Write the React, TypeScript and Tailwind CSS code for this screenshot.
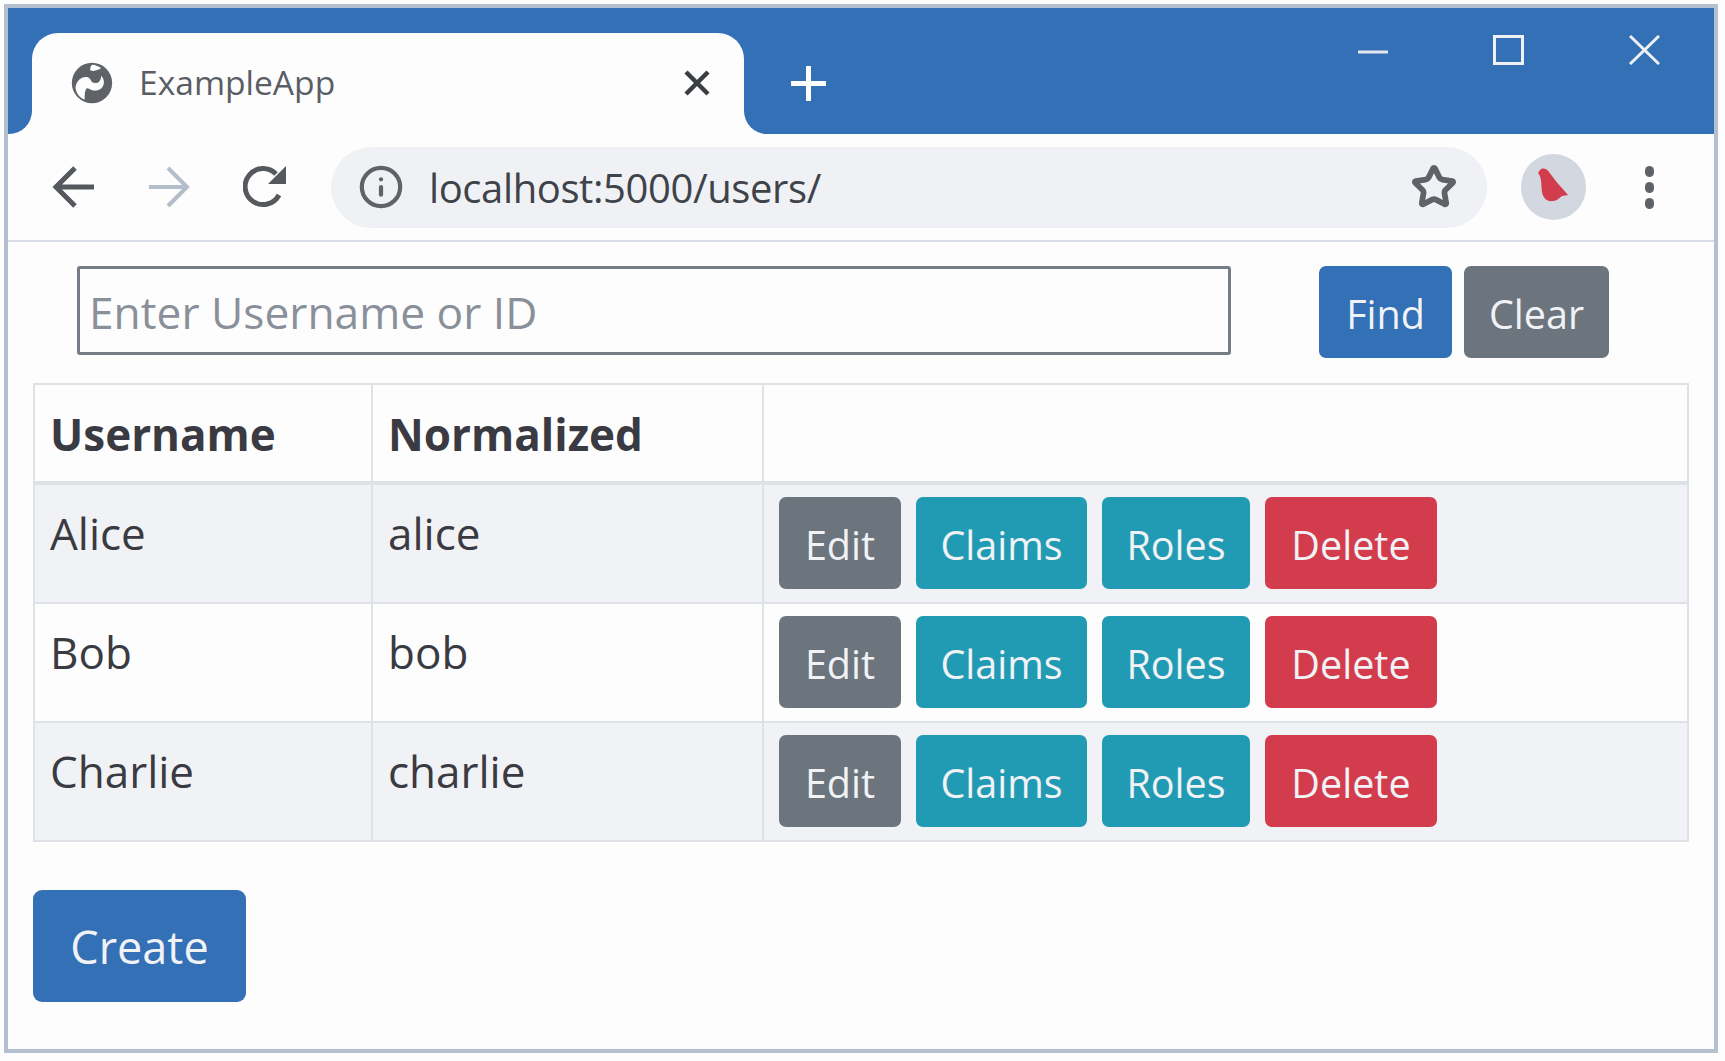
import React from 'react';
import { Info, Star } from 'lucide-react';

interface User {
    name: string;
    normalized: string;
}

const users: User[] = [
    { name: 'Alice', normalized: 'alice' },
    { name: 'Bob', normalized: 'bob' },
    { name: 'Charlie', normalized: 'charlie' },
];

const rowHeights = ['h-[120px]', 'h-[119px]', 'h-[119px]'];
const btn = 'h-[92px] pt-[5px] rounded-[7px] text-[#f1f2f5] text-[39.5px] leading-none';

function Globe() {
    return (
        <svg width="44" height="44" viewBox="0 0 24 24">
            <circle cx="12" cy="12" r="11" fill="#5f6368" />
            <path d="M3 14c1-4 4-6 7-5 2 1 1 3 4 3 2 0 3-2 3-4 2 2 2 5 0 7-3 2-5 1-7 0-2-1-2 4-2 6-3-1-5-4-5-7z" fill="#fdfdfe" />
            <path d="M12 2c2 0 4 1 5 2-2 1-4 2-6 1 0-1 0-2 1-3z" fill="#fdfdfe" />
        </svg>
    );
}

function Bird() {
    return (
        <svg width="36" height="40" viewBox="0 0 36 40">
            <path d="M4 3c3-3 7-1 9 2 4 5 8 11 12 15l7 8-6 1c-3 2-5 5-9 5-6 1-10-3-11-9C5 18 6 10 2 6z" fill="#d33c4c" />
        </svg>
    );
}

function TabStrip() {
    return (
        <div className="h-[126px] bg-[#3370b5] flex items-end pl-[24px] shrink-0">
            <div className="relative w-[712px] h-[101px] bg-[#fdfdfe] rounded-t-[26px] flex items-center pl-[38px] pb-[2px]">
                <div className="absolute left-[-23px] bottom-0 w-[23px] h-[23px] bg-[#fdfdfe]">
                    <div className="w-full h-full bg-[#3370b5] rounded-br-[23px]" />
                </div>
                <div className="absolute right-[-23px] bottom-0 w-[23px] h-[23px] bg-[#fdfdfe]">
                    <div className="w-full h-full bg-[#3370b5] rounded-bl-[23px]" />
                </div>
                <Globe />
                <span className="ml-[25px] text-[33.6px] text-[#5a5e64]">ExampleApp</span>
                <svg className="ml-auto mr-[34px]" width="26" height="26" viewBox="0 0 26 26">
                    <path d="M2 2l22 22M24 2L2 24" stroke="#3a3d42" strokeWidth="4.5" />
                </svg>
            </div>
            <svg className="ml-[47px] mb-[33px]" width="35" height="35" viewBox="0 0 35 35">
                <path d="M17.5 0v35M0 17.5h35" stroke="#fdfdfe" strokeWidth="5" />
            </svg>
            <div className="ml-auto self-start flex items-center pt-[27px] pr-[54px]">
                <svg width="30" height="30" viewBox="0 0 30 30">
                    <path d="M0 17h30" stroke="#e4e7ee" strokeWidth="3" />
                </svg>
                <svg className="ml-[105px]" width="31" height="30" viewBox="0 0 31 30">
                    <rect x="1.5" y="1.5" width="28" height="27" fill="none" stroke="#eef0f4" strokeWidth="3" />
                </svg>
                <svg className="ml-[105px]" width="31" height="30" viewBox="0 0 31 30">
                    <path d="M1 1l29 28M30 1L1 29" stroke="#eef0f4" strokeWidth="3" />
                </svg>
            </div>
        </div>
    );
}

function Toolbar() {
    return (
        <div className="h-[108px] shrink-0 bg-[#fdfdfe] border-b-2 border-[#d8dce6] flex items-center pl-[43px]">
            <svg width="44" height="44" viewBox="0 0 44 44" fill="none" stroke="#55585d" strokeWidth="5">
                <path d="M43 22H5M24 3L5 22l19 19" />
            </svg>
            <svg className="ml-[53px]" width="44" height="44" viewBox="0 0 44 44" fill="none" stroke="#b4bdca" strokeWidth="4">
                <path d="M1 22h38M20 3l19 19-19 19" />
            </svg>
            <svg className="ml-[51px]" width="44" height="44" viewBox="0 0 44 44" fill="none">
                <path d="M36 30A18 18 0 1 1 33 9" stroke="#55585d" strokeWidth="5" />
                <path d="M43 1v18H25z" fill="#55585d" />
            </svg>
            <div className="ml-[44px] w-[1156px] h-[81px] rounded-full bg-[#f0f1f5] flex items-center pl-[27px] pr-[30px]">
                <Info size={46} strokeWidth={2.2} color="#5f6368" />
                <span className="ml-[25px] pt-[1px] text-[40px] text-[#3f4349] tracking-[-0.4px]">localhost:5000/users/</span>
                <Star size={46} strokeWidth={3} color="#5f6368" className="ml-auto" />
            </div>
            <div className="ml-[34px] w-[65px] h-[66px] rounded-full bg-[#d3d7e0] flex items-center justify-center">
                <Bird />
            </div>
            <div className="ml-[59px] flex flex-col gap-[5px]">
                <div className="w-[9px] h-[11px] rounded-full bg-[#5f6368]" />
                <div className="w-[9px] h-[11px] rounded-full bg-[#5f6368]" />
                <div className="w-[9px] h-[11px] rounded-full bg-[#5f6368]" />
            </div>
        </div>
    );
}

export default function App() {
    return (
        <div className="w-[1725px] h-[1061px] bg-[#fdfdfe] pt-[4px] pl-[4px] font-['Open_Sans',sans-serif] overflow-hidden">
            <div className="w-[1714px] h-[1049px] border-[4px] border-[#b4bfd0] flex flex-col">
                <TabStrip />
                <Toolbar />
                <div className="flex-1 bg-[#fdfdfe] pl-[25px]">
                    <div className="flex items-start pt-[24px] pl-[44px]">
                        <div className="w-[1154px] h-[89px] border-[3px] border-[#767c85] rounded-[3px] flex items-center pl-[9px] pt-[3px] text-[44.3px] text-[#8a9099]">
                            Enter Username or ID
                        </div>
                        <button className={`${btn} ml-[88px] w-[133px] bg-[#3370b5]`}>Find</button>
                        <button className={`${btn} ml-[12px] w-[145px] bg-[#6c757d]`}>Clear</button>
                    </div>
                    <table className="mt-[25px] w-[1654px] table-fixed border-collapse text-[#3a3a42] text-[44px]">
                        <colgroup>
                            <col className="w-[338px]" />
                            <col className="w-[391px]" />
                            <col className="w-[925px]" />
                        </colgroup>
                        <thead>
                            <tr className="h-[99px]">
                                <th className="border-2 border-b-4 border-[#dee2e6] text-left pl-[15px] pt-[2px] font-bold">Username</th>
                                <th className="border-2 border-b-4 border-[#dee2e6] text-left pl-[15px] pt-[2px] font-bold">Normalized</th>
                                <th className="border-2 border-b-4 border-[#dee2e6]" />
                            </tr>
                        </thead>
                        <tbody>
                            {users.map((user, i) => (
                                <tr key={user.name} className={`${rowHeights[i]} ${i % 2 === 0 ? 'bg-[#f1f2f5]' : ''}`}>
                                    <td className="border-2 border-[#dee2e6] align-top pl-[15px] pt-[15px]">{user.name}</td>
                                    <td className="border-2 border-[#dee2e6] align-top pl-[15px] pt-[15px]">{user.normalized}</td>
                                    <td className="border-2 border-[#dee2e6] align-top pl-[15px] pt-[12px]">
                                        <div className="flex gap-[15px]">
                                            <button className={`${btn} w-[122px] bg-[#6c757d]`}>Edit</button>
                                            <button className={`${btn} w-[171px] bg-[#219bb3]`}>Claims</button>
                                            <button className={`${btn} w-[148px] bg-[#219bb3]`}>Roles</button>
                                            <button className={`${btn} w-[172px] bg-[#d33c4c]`}>Delete</button>
                                        </div>
                                    </td>
                                </tr>
                            ))}
                        </tbody>
                    </table>
                    <button className="mt-[48px] w-[213px] h-[112px] rounded-[9px] bg-[#3370b5] text-[#f1f2f5] text-[45px] leading-none">
                        Create
                    </button>
                </div>
            </div>
        </div>
    );
}
